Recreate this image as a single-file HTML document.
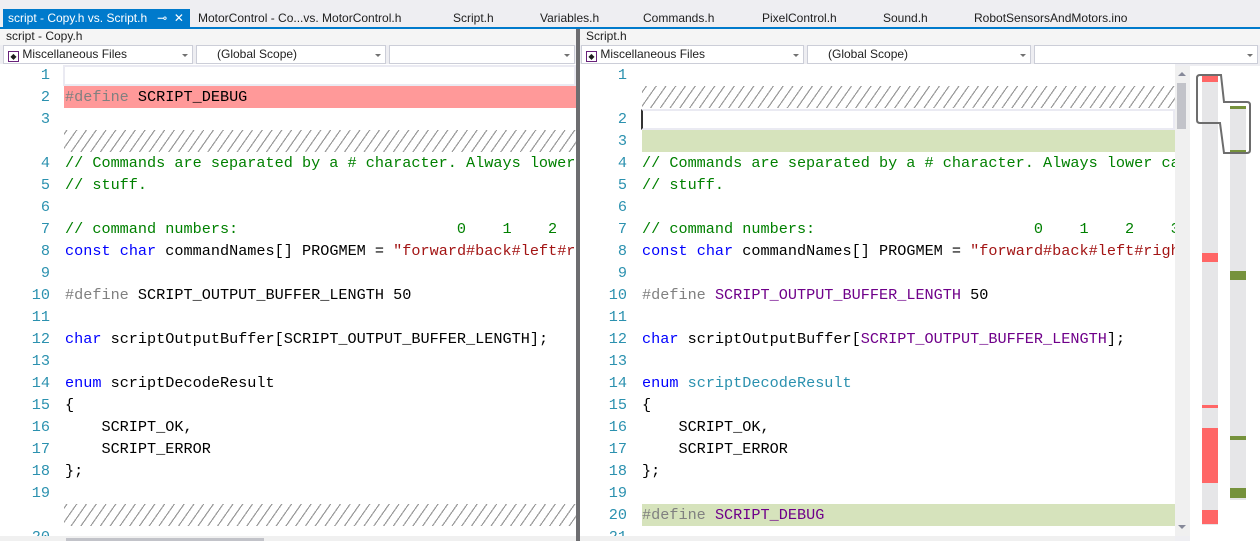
<!DOCTYPE html><html><head><meta charset="utf-8"><style>
*{margin:0;padding:0;box-sizing:border-box}
body{width:1260px;height:541px;overflow:hidden;background:#eeeef2;font-family:"Liberation Sans",sans-serif;position:relative}
.abs{position:absolute}
.tab{position:absolute;top:11px;font-size:12px;color:#1e1e1e;white-space:nowrap}
.hdr{position:absolute;top:29px;height:16px;font-size:12px;color:#1e1e1e;background:#f5f5f5;padding-left:6px;line-height:15px}
.dd{position:absolute;top:45px;height:19px;background:#fff;border:1px solid #ccced8;font-size:12px;line-height:17px;color:#1e1e1e;padding-left:4px;white-space:nowrap}
.dd:after{content:"";position:absolute;right:4px;top:8px;border:3px solid transparent;border-top:3px solid #717171}
.code{position:absolute;top:64px;height:472px;background:#fff;overflow:hidden;font-family:"Liberation Mono",monospace;font-size:15.2px}
.r{position:absolute;left:0;right:0;height:22px;line-height:22px;white-space:pre}
.n{position:absolute;width:50px;text-align:right;color:#2b91af}
.t{position:absolute;left:65px}
.hatch{position:absolute;left:64px;right:0;height:22px;background:repeating-linear-gradient(-55deg,#fff 0 5px,#9a9a9a 5px 6.2px,#fff 6.2px 8px)}
.c{color:#008000}.k{color:#0000ff}.s{color:#a31515}.p{color:#808080}.m{color:#6f008a}.e{color:#2b91af}
</style></head><body>
<div class="abs" style="left:0;top:27px;width:1260px;height:2px;background:#007acc"></div>
<div class="abs" style="left:3px;top:9px;width:187px;height:19px;background:#007acc"></div>
<div class="tab" style="left:8px;color:#fff">script - Copy.h vs. Script.h&nbsp;&nbsp;&nbsp;⊸&nbsp;&nbsp;✕</div>
<div class="tab" style="left:198px">MotorControl - Co...vs. MotorControl.h</div>
<div class="tab" style="left:453px">Script.h</div>
<div class="tab" style="left:540px">Variables.h</div>
<div class="tab" style="left:643px">Commands.h</div>
<div class="tab" style="left:762px">PixelControl.h</div>
<div class="tab" style="left:883px">Sound.h</div>
<div class="tab" style="left:974px">RobotSensorsAndMotors.ino</div>

<div class="hdr" style="left:0;width:576px">script - Copy.h</div>
<div class="hdr" style="left:580px;width:680px">Script.h</div>
<div class="abs" style="left:576px;top:29px;width:4px;height:512px;background:#6d6d70"></div>

<div class="dd" style="left:3px;width:190px"><span style="display:inline-block;width:11px;height:11px;border:1px solid #68217a;vertical-align:-1px;font-size:8px;line-height:9px;text-align:center">◆</span> Miscellaneous Files</div>
<div class="dd" style="left:196px;width:190px;padding-left:20px">(Global Scope)</div>
<div class="dd" style="left:389px;width:186px"></div>
<div class="dd" style="left:581px;width:223px"><span style="display:inline-block;width:11px;height:11px;border:1px solid #68217a;vertical-align:-1px;font-size:8px;line-height:9px;text-align:center">◆</span> Miscellaneous Files</div>
<div class="dd" style="left:807px;width:224px;padding-left:20px">(Global Scope)</div>
<div class="dd" style="left:1034px;width:224px"></div>

<!-- LEFT -->
<div class="code" style="left:0;width:576px">
<div class="abs" style="left:63px;top:1px;width:513px;height:21px;border:2px solid #eaeaf2"></div>
<div class="r" style="top:0"><span class="n">1</span></div>
<div class="abs" style="left:64px;top:22px;width:512px;height:22px;background:#ff9999"></div>
<div class="r" style="top:22px"><span class="n">2</span><span class="t"><span class="p">#define</span> SCRIPT_DEBUG</span></div>
<div class="r" style="top:44px"><span class="n">3</span></div>
<div class="hatch" style="top:66px"></div>
<div class="r" style="top:88px"><span class="n">4</span><span class="t c">// Commands are separated by a # character. Always lower case</span></div>
<div class="r" style="top:110px"><span class="n">5</span><span class="t c">// stuff.</span></div>
<div class="r" style="top:132px"><span class="n">6</span></div>
<div class="r" style="top:154px"><span class="n">7</span><span class="t c">// command numbers:                        0    1    2    3</span></div>
<div class="r" style="top:176px"><span class="n">8</span><span class="t"><span class="k">const</span> <span class="k">char</span> commandNames[] PROGMEM = <span class="s">"forward#back#left#right</span></span></div>
<div class="r" style="top:198px"><span class="n">9</span></div>
<div class="r" style="top:220px"><span class="n">10</span><span class="t"><span class="p">#define</span> SCRIPT_OUTPUT_BUFFER_LENGTH 50</span></div>
<div class="r" style="top:242px"><span class="n">11</span></div>
<div class="r" style="top:264px"><span class="n">12</span><span class="t"><span class="k">char</span> scriptOutputBuffer[SCRIPT_OUTPUT_BUFFER_LENGTH];</span></div>
<div class="r" style="top:286px"><span class="n">13</span></div>
<div class="r" style="top:308px"><span class="n">14</span><span class="t"><span class="k">enum</span> scriptDecodeResult</span></div>
<div class="r" style="top:330px"><span class="n">15</span><span class="t">{</span></div>
<div class="r" style="top:352px"><span class="n">16</span><span class="t">    SCRIPT_OK,</span></div>
<div class="r" style="top:374px"><span class="n">17</span><span class="t">    SCRIPT_ERROR</span></div>
<div class="r" style="top:396px"><span class="n">18</span><span class="t">};</span></div>
<div class="r" style="top:418px"><span class="n">19</span></div>
<div class="hatch" style="top:440px"></div>
<div class="r" style="top:462px"><span class="n">20</span></div>
</div>
<div class="abs" style="left:0;top:536px;width:576px;height:5px;background:#f0f0f0"></div>
<div class="abs" style="left:66px;top:538px;width:198px;height:3px;background:#c2c3c9"></div>

<!-- RIGHT -->
<div class="code" style="left:580px;width:595px">
<div class="r" style="top:0"><span class="n" style="left:-3px">1</span></div>
<div class="hatch" style="top:22px;left:62px"></div>
<div class="abs" style="left:61px;top:45px;width:534px;height:21px;border:2px solid #eaeaf2;border-left:2px solid #333"></div>
<div class="r" style="top:44px"><span class="n" style="left:-3px">2</span></div>
<div class="abs" style="left:62px;top:66px;width:533px;height:22px;background:#d6e3bc"></div>
<div class="r" style="top:66px"><span class="n" style="left:-3px">3</span></div>
<div class="r" style="top:88px"><span class="n" style="left:-3px">4</span><span class="t c" style="left:62px">// Commands are separated by a # character. Always lower case</span></div>
<div class="r" style="top:110px"><span class="n" style="left:-3px">5</span><span class="t c" style="left:62px">// stuff.</span></div>
<div class="r" style="top:132px"><span class="n" style="left:-3px">6</span></div>
<div class="r" style="top:154px"><span class="n" style="left:-3px">7</span><span class="t c" style="left:62px">// command numbers:                        0    1    2    3</span></div>
<div class="r" style="top:176px"><span class="n" style="left:-3px">8</span><span class="t" style="left:62px"><span class="k">const</span> <span class="k">char</span> commandNames[] PROGMEM = <span class="s">"forward#back#left#right</span></span></div>
<div class="r" style="top:198px"><span class="n" style="left:-3px">9</span></div>
<div class="r" style="top:220px"><span class="n" style="left:-3px">10</span><span class="t" style="left:62px"><span class="p">#define</span> <span class="m">SCRIPT_OUTPUT_BUFFER_LENGTH</span> 50</span></div>
<div class="r" style="top:242px"><span class="n" style="left:-3px">11</span></div>
<div class="r" style="top:264px"><span class="n" style="left:-3px">12</span><span class="t" style="left:62px"><span class="k">char</span> scriptOutputBuffer[<span class="m">SCRIPT_OUTPUT_BUFFER_LENGTH</span>];</span></div>
<div class="r" style="top:286px"><span class="n" style="left:-3px">13</span></div>
<div class="r" style="top:308px"><span class="n" style="left:-3px">14</span><span class="t" style="left:62px"><span class="k">enum</span> <span class="e">scriptDecodeResult</span></span></div>
<div class="r" style="top:330px"><span class="n" style="left:-3px">15</span><span class="t" style="left:62px">{</span></div>
<div class="r" style="top:352px"><span class="n" style="left:-3px">16</span><span class="t" style="left:62px">    SCRIPT_OK,</span></div>
<div class="r" style="top:374px"><span class="n" style="left:-3px">17</span><span class="t" style="left:62px">    SCRIPT_ERROR</span></div>
<div class="r" style="top:396px"><span class="n" style="left:-3px">18</span><span class="t" style="left:62px">};</span></div>
<div class="r" style="top:418px"><span class="n" style="left:-3px">19</span></div>
<div class="abs" style="left:62px;top:440px;width:533px;height:22px;background:#d6e3bc"></div>
<div class="r" style="top:440px"><span class="n" style="left:-3px">20</span><span class="t" style="left:62px"><span class="p">#define</span> <span class="m">SCRIPT_DEBUG</span></span></div>
<div class="r" style="top:462px"><span class="n" style="left:-3px">21</span></div>
</div>
<div class="abs" style="left:580px;top:536px;width:595px;height:5px;background:#f0f0f0"></div>
<!-- scrollbar -->
<div class="abs" style="left:1175px;top:66px;width:15px;height:470px;background:#f0f0f0"></div>
<div class="abs" style="left:1178px;top:72px;border:4px solid transparent;border-bottom:4px solid #868999;border-top:0"></div>
<div class="abs" style="left:1178px;top:525px;border:4px solid transparent;border-top:4px solid #868999;border-bottom:0"></div>
<div class="abs" style="left:1177px;top:83px;width:9px;height:46px;background:#c2c3c9"></div>
<!-- overview -->
<div class="abs" style="left:1190px;top:66px;width:70px;height:475px;background:#fff"></div>
<div class="abs" style="left:1202px;top:76px;width:16px;height:449px;background:#e6e6e8"></div>
<div class="abs" style="left:1202px;top:76px;width:16px;height:6px;background:#ff6666"></div>
<div class="abs" style="left:1202px;top:253px;width:16px;height:9px;background:#ff6666"></div>
<div class="abs" style="left:1202px;top:405px;width:16px;height:3px;background:#ff6666"></div>
<div class="abs" style="left:1202px;top:428px;width:16px;height:55px;background:#ff6666"></div>
<div class="abs" style="left:1202px;top:510px;width:16px;height:14px;background:#ff6666"></div>
<div class="abs" style="left:1230px;top:106px;width:16px;height:394px;background:#e6e6e8"></div>
<div class="abs" style="left:1230px;top:106px;width:16px;height:3px;background:#76923c"></div>
<div class="abs" style="left:1230px;top:150px;width:16px;height:4px;background:#76923c"></div>
<div class="abs" style="left:1230px;top:271px;width:16px;height:9px;background:#76923c"></div>
<div class="abs" style="left:1230px;top:436px;width:16px;height:4px;background:#76923c"></div>
<div class="abs" style="left:1230px;top:488px;width:16px;height:10px;background:#76923c"></div>
<svg class="abs" style="left:1190px;top:66px" width="70" height="100"><path d="M7 12 Q7 9 10 9 H31 L34 36 H57 Q60 36 60 39 V84 Q60 87 57 87 H34 L30 57 H10 Q7 57 7 54 Z" fill="none" stroke="#6d6d6d" stroke-width="2"/></svg>
</body></html>
